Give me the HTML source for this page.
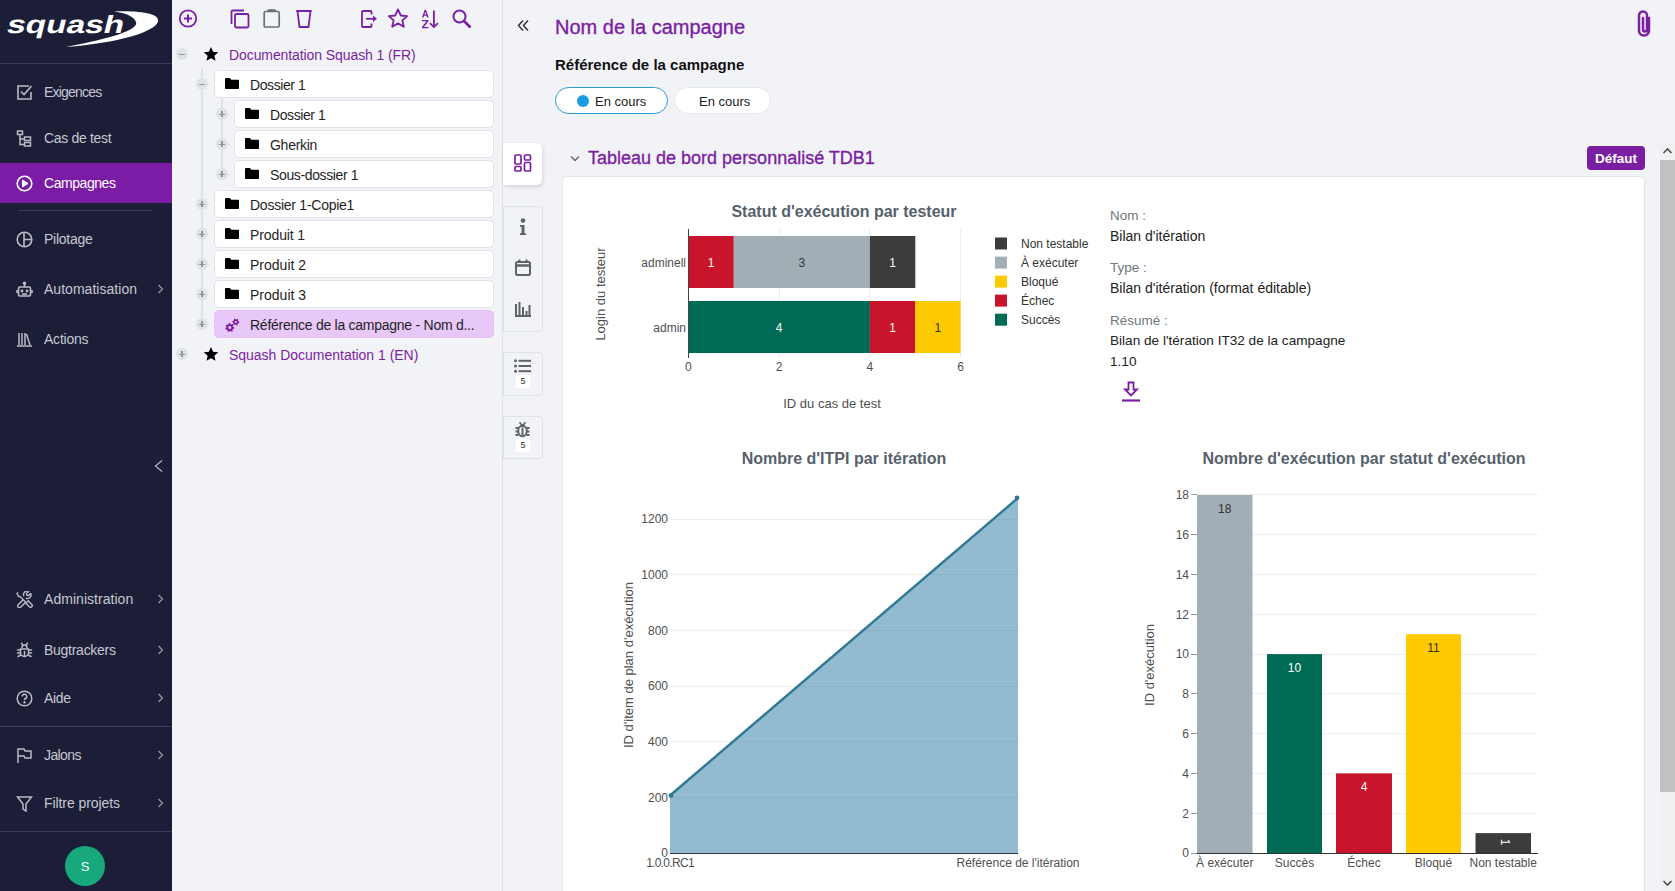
<!DOCTYPE html>
<html><head><meta charset="utf-8">
<style>
*{box-sizing:border-box;margin:0;padding:0}
html,body{width:1675px;height:891px;overflow:hidden;background:#f2f3f7;font-family:"Liberation Sans",sans-serif;}
.abs{position:absolute}
#nav{position:absolute;left:0;top:0;width:172px;height:891px;background:#1c1e37;color:#c5c8d1}
.mi{position:absolute;left:0;width:172px;height:40px;font-size:14px;line-height:40px}
.mi .t{position:absolute;left:44px;top:0;white-space:nowrap}
.mi svg{position:absolute;left:16px;top:12px}
.mi .ch{position:absolute;left:156.5px;top:15px}
.hr{position:absolute;height:1px;background:#3a3d58}
#tree{position:absolute;left:172px;top:0;width:331px;height:891px;background:#f2f3f7;border-right:1px solid #dde0e6}
.tb{position:absolute;top:9px}
.node{position:absolute;height:28px;background:#fff;border:1px solid #dfe2e8;border-radius:5px;font-size:14px;color:#1f1f1f;line-height:26px}
.node .t{position:absolute;left:35px;top:1px;white-space:nowrap}
.node .fi{position:absolute;left:10px;top:7px}
.tog{position:absolute;width:12px;height:12px;border-radius:50%;background:#dfe3e8}
.tog:before{content:"";position:absolute;left:3px;top:5.5px;width:6px;height:1.2px;background:#8e97a0}
.tog.p:after{content:"";position:absolute;left:5.4px;top:3px;width:1.2px;height:6px;background:#8e97a0}
.vl{position:absolute;width:2px;background:#dfe3e8}
.hl{position:absolute;height:1px;background:#dfe3e8}
</style></head><body>

<!-- SIDEBAR -->
<div id="nav">
  <svg class="abs" style="left:0;top:0" width="172" height="63" viewBox="0 0 172 63">
    <path d="M114 11.5 C142 10.5 160 14 158 21.5 C155 32 118 43 66 47 C112 38 139 30 136 22 C134 16.5 126 13 114 11.5 Z" fill="#fff"/>
    <text x="0" y="0" transform="translate(5.5 32.5) skewX(-14)" font-family="Liberation Sans" font-weight="bold" font-size="25" fill="#fff" textLength="117" lengthAdjust="spacingAndGlyphs">squash</text>
  </svg>
  <div class="hr" style="left:0;top:63px;width:172px"></div>

  <div class="mi" style="top:72px">
    <svg width="17" height="17" viewBox="0 0 17 17" fill="none" stroke="#b9bcc7" stroke-width="1.6"><path d="M13 2H2v13h13V8"/><path d="M5 7.5l3 3L15.5 2"/></svg>
    <span class="t" style="letter-spacing:-0.79px">Exigences</span></div>
  <div class="mi" style="top:118px">
    <svg width="17" height="17" viewBox="0 0 17 17" fill="none" stroke="#b9bcc7" stroke-width="1.5"><rect x="1.5" y="1" width="5" height="3.5"/><rect x="8.5" y="7" width="6" height="3.5"/><rect x="8.5" y="12.5" width="6" height="3.5"/><path d="M4 4.5v10h4.5M4 9h4.5"/></svg>
    <span class="t" style="letter-spacing:-0.32px">Cas de test</span></div>
  <div class="mi" style="top:163px;background:#7a1ca6;color:#fff">
    <svg width="17" height="17" viewBox="0 0 17 17" fill="none" stroke="#fff" stroke-width="1.6"><circle cx="8.5" cy="8.5" r="7.3"/><path d="M6.5 5v7l5.5-3.5z" fill="#fff" stroke-width="1"/></svg>
    <span class="t" style="letter-spacing:-0.45px">Campagnes</span></div>
  <div class="hr" style="left:18px;top:210px;width:134px"></div>
  <div class="mi" style="top:219px">
    <svg width="17" height="17" viewBox="0 0 17 17" fill="none" stroke="#b9bcc7" stroke-width="1.6"><circle cx="8.5" cy="8.5" r="7.3"/><path d="M8 1.2v14.6M8 8.5h7.3"/></svg>
    <span class="t" style="letter-spacing:-0.26px">Pilotage</span></div>
  <div class="mi" style="top:269px">
    <svg width="17" height="17" viewBox="0 0 17 17" fill="none" stroke="#b9bcc7" stroke-width="1.6"><rect x="2.5" y="6" width="12" height="9" rx="1.5"/><path d="M8.5 6V3"/><circle cx="8.5" cy="2.3" r="1" fill="#b9bcc7"/><path d="M1 9v3M16 9v3"/><circle cx="6" cy="10" r=".6" fill="#b9bcc7"/><circle cx="11" cy="10" r=".6" fill="#b9bcc7"/><path d="M6 13h5"/></svg>
    <span class="t" style="letter-spacing:0.03px">Automatisation</span><svg class="ch" width="7" height="10" viewBox="0 0 7 10" fill="none" stroke="#8f93a4" stroke-width="1.3"><path d="M1.5 1l4 4-4 4"/></svg></div>
  <div class="mi" style="top:319px">
    <svg width="17" height="17" viewBox="0 0 17 17" fill="none" stroke="#b9bcc7" stroke-width="1.5"><path d="M3 2v12M6 2v12M9 2v12M10.5 3l3.5 11M1 15h15"/></svg>
    <span class="t" style="letter-spacing:-0.22px">Actions</span></div>

  <svg class="abs" style="left:154px;top:459px" width="9" height="14" viewBox="0 0 9 14" fill="none" stroke="#b3b6d2" stroke-width="1.2"><path d="M8 1.5L1.5 7 8 12.5"/></svg>

  <div class="mi" style="top:579px">
    <svg width="17" height="17" viewBox="0 0 17 17" fill="none" stroke="#b9bcc7" stroke-width="1.4" stroke-linejoin="round"><path d="M2 1.5L1 2.5l1.5 3h1.5l5.5 5.5"/><path d="M9.8 12.2l2.4-2.4 3.6 3.6a1.7 1.7 0 0 1-2.4 2.4z"/><path d="M7.2 8.8l-5 5a1.7 1.7 0 0 0 2.4 2.4l5-5"/><path d="M9.8 7.2a3.6 3.6 0 0 0 4.9-4.7l-2.1 2.1-1.7-.4-.4-1.7 2.1-2.1a3.6 3.6 0 0 0-4.7 4.9"/></svg>
    <span class="t" style="letter-spacing:0.04px">Administration</span><svg class="ch" width="7" height="10" viewBox="0 0 7 10" fill="none" stroke="#8f93a4" stroke-width="1.3"><path d="M1.5 1l4 4-4 4"/></svg></div>
  <div class="mi" style="top:630px">
    <svg width="17" height="17" viewBox="0 0 17 17" fill="none" stroke="#b9bcc7" stroke-width="1.5" stroke-linecap="round"><path d="M6 5.5a2.5 2.5 0 0 1 5 0"/><path d="M4.5 7h8v3.5a4 4 0 0 1-8 0z"/><path d="M8.5 9.5v5"/><path d="M1.5 8h2.5M13 8h2.5M1.5 11h2.5M13 11h2.5M2 14.5l2.5-1.2M15 14.5l-2.5-1.2M5.5 1.2l1.5 2.3M11.5 1.2L10 3.5"/></svg>
    <span class="t" style="letter-spacing:-0.27px">Bugtrackers</span><svg class="ch" width="7" height="10" viewBox="0 0 7 10" fill="none" stroke="#8f93a4" stroke-width="1.3"><path d="M1.5 1l4 4-4 4"/></svg></div>
  <div class="mi" style="top:678px">
    <svg width="17" height="17" viewBox="0 0 17 17" fill="none" stroke="#b9bcc7" stroke-width="1.5"><circle cx="8.5" cy="8.5" r="7.3"/><path d="M6.3 6.5a2.2 2.2 0 1 1 3 2c-.7.3-.8.8-.8 1.6"/><circle cx="8.5" cy="12.3" r=".5" fill="#b9bcc7"/></svg>
    <span class="t" style="letter-spacing:-0.30px">Aide</span><svg class="ch" width="7" height="10" viewBox="0 0 7 10" fill="none" stroke="#8f93a4" stroke-width="1.3"><path d="M1.5 1l4 4-4 4"/></svg></div>
  <div class="hr" style="left:0;top:726px;width:172px"></div>
  <div class="mi" style="top:735px">
    <svg width="17" height="17" viewBox="0 0 17 17" fill="none" stroke="#b9bcc7" stroke-width="1.5"><path d="M2 16V2h6l1 2h6v7H9l-1-2H2"/></svg>
    <span class="t" style="letter-spacing:-0.61px">Jalons</span><svg class="ch" width="7" height="10" viewBox="0 0 7 10" fill="none" stroke="#8f93a4" stroke-width="1.3"><path d="M1.5 1l4 4-4 4"/></svg></div>
  <div class="mi" style="top:783px">
    <svg width="17" height="17" viewBox="0 0 17 17" fill="none" stroke="#b9bcc7" stroke-width="1.5"><path d="M1.5 2h14l-5.5 7v7l-3-2V9z"/></svg>
    <span class="t" style="letter-spacing:-0.08px">Filtre projets</span><svg class="ch" width="7" height="10" viewBox="0 0 7 10" fill="none" stroke="#8f93a4" stroke-width="1.3"><path d="M1.5 1l4 4-4 4"/></svg></div>
  <div class="hr" style="left:0;top:831px;width:172px"></div>
  <div class="abs" style="left:65px;top:846px;width:40px;height:40px;border-radius:50%;background:#17a97c;color:#fff;font-size:13px;line-height:41px;text-align:center">S</div>
</div>

<!-- TREE -->
<div id="tree">
  <!-- toolbar -->
  <svg class="abs" style="left:6px;top:9px" width="20" height="20" viewBox="0 0 20 20" fill="none" stroke="#7b1fa2" stroke-width="1.8"><circle cx="10" cy="9.5" r="8.2"/><path d="M10 5.5v8M6 9.5h8" stroke-width="2"/></svg>
  <svg class="abs" style="left:58px;top:9px" width="20" height="20" viewBox="0 0 20 20" fill="none" stroke="#7b1fa2" stroke-width="1.8"><path d="M1.5 15V2.5a1 1 0 0 1 1-1H14"/><rect x="5" y="5" width="13.5" height="13.5" rx="1.5"/></svg>
  <svg class="abs" style="left:91px;top:8px" width="18" height="20" viewBox="0 0 18 20" fill="none" stroke="#6b7079" stroke-width="1.7"><rect x="1.2" y="3.5" width="15" height="15.5" rx="1.2"/><path d="M5.5 3.5V2.2h6.5v1.3"/><circle cx="8.7" cy="1.9" r="1" fill="#6b7079" stroke="none"/></svg>
  <svg class="abs" style="left:123px;top:9px" width="18" height="20" viewBox="0 0 18 20" fill="none" stroke="#7b1fa2" stroke-width="1.8"><path d="M1.2 2h15.5M2.5 2l2 16h9l2-16"/></svg>
  <svg class="abs" style="left:188.5px;top:10px" width="17" height="18" viewBox="0 0 17 18" fill="none" stroke="#7b1fa2" stroke-width="1.8"><path d="M10.5 4.5V2a1 1 0 0 0-1-1H2a1 1 0 0 0-1 1V16a1 1 0 0 0 1 1h7.5a1 1 0 0 0 1-1v-2.5"/><path d="M5 8.8h8"/><path d="M12 5.5l4 3.3-4 3.3z" fill="#7b1fa2" stroke="none"/></svg>
  <svg class="abs" style="left:215px;top:8px" width="22" height="21" viewBox="0 0 22 21" fill="none" stroke="#7b1fa2" stroke-width="1.8" stroke-linejoin="round"><path d="M11 1.5l2.8 6 6.4.6-4.9 4.3 1.5 6.4L11 15.4l-5.8 3.4 1.5-6.4L1.8 8.1l6.4-.6z"/></svg>
  <svg class="abs" style="left:249px;top:9px" width="18" height="20" viewBox="0 0 18 20" fill="#7b1fa2"><path d="M1 8.5L3.5 1h1.6L7.6 8.5H6.1l-.6-1.8H3.1l-.6 1.8zM3.5 5.5h1.7L4.3 2.7z"/><path d="M1 11h6.4v1.3L3 18h4.5v1.3H1v-1.3l4.4-5.7H1z"/><path d="M12 1.5h1.8v14.5l2.5-2.5 1.2 1.2-4.6 4.6-4.6-4.6 1.2-1.2 2.5 2.5z"/></svg>
  <svg class="abs" style="left:280px;top:9px" width="20" height="20" viewBox="0 0 20 20" fill="none" stroke="#7b1fa2" stroke-width="2"><circle cx="7.5" cy="7.5" r="6"/><path d="M12 12l6.5 6.5" stroke-width="2.6"/></svg>

  <!-- root 1 -->
  <div class="tog" style="left:4px;top:48px"></div>
  <svg class="abs" style="left:31px;top:46px" width="16" height="16" viewBox="0 0 24 24"><path d="M12 1.5l3.1 7.2 7.8.7-5.9 5.2 1.8 7.7L12 18.2l-6.8 4.1 1.8-7.7L1.1 9.4l7.8-.7z" fill="#000"/></svg>
  <div class="abs" style="left:57px;top:47px;font-size:14px;color:#7b1fa2;white-space:nowrap;line-height:17px;letter-spacing:-0.09px">Documentation Squash 1 (FR)</div>

  <div class="vl" style="left:29px;top:69px;height:256px"></div>
  <div class="vl" style="left:49px;top:99px;height:76px"></div>
  <div class="hl" style="left:30px;top:84px;width:8px"></div>
  <div class="tog " style="left:24px;top:78px"></div>
  <div class="node" style="left:42px;top:70px;width:280px"><svg class="fi" width="14" height="11" viewBox="0 0 15 12" preserveAspectRatio="none"><path d="M0 1.2C0 .5.5 0 1.2 0h4l1.6 1.8h7c.7 0 1.2.5 1.2 1.2v7.8c0 .7-.5 1.2-1.2 1.2H1.2C.5 12 0 11.5 0 10.8z" fill="#000"/></svg><span class="t" style="letter-spacing:-0.42px">Dossier 1</span></div>
  <div class="hl" style="left:50px;top:114px;width:8px"></div>
  <div class="tog p" style="left:44px;top:108px"></div>
  <div class="node" style="left:62px;top:100px;width:260px"><svg class="fi" width="14" height="11" viewBox="0 0 15 12" preserveAspectRatio="none"><path d="M0 1.2C0 .5.5 0 1.2 0h4l1.6 1.8h7c.7 0 1.2.5 1.2 1.2v7.8c0 .7-.5 1.2-1.2 1.2H1.2C.5 12 0 11.5 0 10.8z" fill="#000"/></svg><span class="t" style="letter-spacing:-0.42px">Dossier 1</span></div>
  <div class="hl" style="left:50px;top:144px;width:8px"></div>
  <div class="tog p" style="left:44px;top:138px"></div>
  <div class="node" style="left:62px;top:130px;width:260px"><svg class="fi" width="14" height="11" viewBox="0 0 15 12" preserveAspectRatio="none"><path d="M0 1.2C0 .5.5 0 1.2 0h4l1.6 1.8h7c.7 0 1.2.5 1.2 1.2v7.8c0 .7-.5 1.2-1.2 1.2H1.2C.5 12 0 11.5 0 10.8z" fill="#000"/></svg><span class="t" style="letter-spacing:-0.27px">Gherkin</span></div>
  <div class="hl" style="left:50px;top:174px;width:8px"></div>
  <div class="tog p" style="left:44px;top:168px"></div>
  <div class="node" style="left:62px;top:160px;width:260px"><svg class="fi" width="14" height="11" viewBox="0 0 15 12" preserveAspectRatio="none"><path d="M0 1.2C0 .5.5 0 1.2 0h4l1.6 1.8h7c.7 0 1.2.5 1.2 1.2v7.8c0 .7-.5 1.2-1.2 1.2H1.2C.5 12 0 11.5 0 10.8z" fill="#000"/></svg><span class="t" style="letter-spacing:-0.37px">Sous-dossier 1</span></div>
  <div class="hl" style="left:30px;top:204px;width:8px"></div>
  <div class="tog p" style="left:24px;top:198px"></div>
  <div class="node" style="left:42px;top:190px;width:280px"><svg class="fi" width="14" height="11" viewBox="0 0 15 12" preserveAspectRatio="none"><path d="M0 1.2C0 .5.5 0 1.2 0h4l1.6 1.8h7c.7 0 1.2.5 1.2 1.2v7.8c0 .7-.5 1.2-1.2 1.2H1.2C.5 12 0 11.5 0 10.8z" fill="#000"/></svg><span class="t" style="letter-spacing:-0.25px">Dossier 1-Copie1</span></div>
  <div class="hl" style="left:30px;top:234px;width:8px"></div>
  <div class="tog p" style="left:24px;top:228px"></div>
  <div class="node" style="left:42px;top:220px;width:280px"><svg class="fi" width="14" height="11" viewBox="0 0 15 12" preserveAspectRatio="none"><path d="M0 1.2C0 .5.5 0 1.2 0h4l1.6 1.8h7c.7 0 1.2.5 1.2 1.2v7.8c0 .7-.5 1.2-1.2 1.2H1.2C.5 12 0 11.5 0 10.8z" fill="#000"/></svg><span class="t" style="letter-spacing:-0.11px">Produit 1</span></div>
  <div class="hl" style="left:30px;top:264px;width:8px"></div>
  <div class="tog p" style="left:24px;top:258px"></div>
  <div class="node" style="left:42px;top:250px;width:280px"><svg class="fi" width="14" height="11" viewBox="0 0 15 12" preserveAspectRatio="none"><path d="M0 1.2C0 .5.5 0 1.2 0h4l1.6 1.8h7c.7 0 1.2.5 1.2 1.2v7.8c0 .7-.5 1.2-1.2 1.2H1.2C.5 12 0 11.5 0 10.8z" fill="#000"/></svg><span class="t" style="letter-spacing:0.01px">Produit 2</span></div>
  <div class="hl" style="left:30px;top:294px;width:8px"></div>
  <div class="tog p" style="left:24px;top:288px"></div>
  <div class="node" style="left:42px;top:280px;width:280px"><svg class="fi" width="14" height="11" viewBox="0 0 15 12" preserveAspectRatio="none"><path d="M0 1.2C0 .5.5 0 1.2 0h4l1.6 1.8h7c.7 0 1.2.5 1.2 1.2v7.8c0 .7-.5 1.2-1.2 1.2H1.2C.5 12 0 11.5 0 10.8z" fill="#000"/></svg><span class="t" style="letter-spacing:0.01px">Produit 3</span></div>
  <div class="hl" style="left:30px;top:324px;width:8px"></div>
  <div class="tog p" style="left:24px;top:318px"></div>
  <div class="node" style="left:42px;top:310px;width:280px;background:#e7c8f8;border-color:#e2c3f3"><svg class="fi" style="left:10px;top:7px" width="15" height="15" viewBox="0 0 15 15"><polygon points="9.40,9.60 9.28,10.62 7.86,11.08 7.46,11.72 7.67,13.20 6.80,13.74 5.56,12.91 4.80,13.00 3.78,14.08 2.80,13.74 2.68,12.26 2.14,11.72 0.66,11.60 0.32,10.62 1.40,9.60 1.49,8.84 0.66,7.60 1.20,6.73 2.68,6.94 3.32,6.54 3.78,5.12 4.80,5.00 5.56,6.29 6.28,6.54 7.67,6.00 8.40,6.73 7.86,8.12 8.11,8.84" fill="#7b1fa2"/><circle cx="4.8" cy="9.6" r="1.5" fill="#e7c8f8"/><polygon points="14.30,4.00 14.18,4.91 13.05,5.30 12.64,5.84 12.55,7.03 11.71,7.38 10.80,6.60 10.13,6.51 9.05,7.03 8.33,6.47 8.55,5.30 8.29,4.67 7.30,4.00 7.42,3.09 8.55,2.70 8.96,2.16 9.05,0.97 9.89,0.62 10.80,1.40 11.47,1.49 12.55,0.97 13.27,1.53 13.05,2.70 13.31,3.33" fill="#7b1fa2"/><circle cx="10.8" cy="4.0" r="1.1" fill="#e7c8f8"/></svg><span class="t" style="letter-spacing:-0.26px">Référence de la campagne - Nom d...</span></div>
  <div class="tog p" style="left:4px;top:348px"></div>
  <svg class="abs" style="left:31px;top:346px" width="16" height="16" viewBox="0 0 24 24"><path d="M12 1.5l3.1 7.2 7.8.7-5.9 5.2 1.8 7.7L12 18.2l-6.8 4.1 1.8-7.7L1.1 9.4l7.8-.7z" fill="#000"/></svg>
  <div class="abs" style="left:57px;top:347px;font-size:14px;color:#7b1fa2;white-space:nowrap;line-height:17px;letter-spacing:-0.02px">Squash Documentation 1 (EN)</div>
</div>


<!-- MAIN HEADER -->
<svg class="abs" style="left:517px;top:19px" width="12" height="13" viewBox="0 0 12 13" fill="none" stroke="#333" stroke-width="1.5"><path d="M6 1.5L1.5 6.5 6 11.5M11 1.5L6.5 6.5 11 11.5"/></svg>
<div class="abs" style="left:555px;top:14.5px;font-size:20px;line-height:24px;color:#7b1fa2;-webkit-text-stroke:0.35px #7b1fa2;white-space:nowrap">Nom de la campagne</div>
<div class="abs" style="left:555px;top:56px;font-size:15px;line-height:18px;font-weight:bold;color:#111;white-space:nowrap">Référence de la campagne</div>
<div class="abs" style="left:555px;top:87px;width:113px;height:27px;border:1.5px solid #2b9bd3;border-radius:14px;background:#fff"></div>
<div class="abs" style="left:577px;top:94.5px;width:12px;height:12px;border-radius:50%;background:#1a9be6"></div>
<div class="abs" style="left:595px;top:93px;font-size:13px;line-height:17px;color:#222;white-space:nowrap">En cours</div>
<div class="abs" style="left:674px;top:87px;width:97px;height:27px;border:1px solid #e3e6eb;border-radius:14px;background:#fff"></div>
<div class="abs" style="left:699px;top:93px;font-size:13px;line-height:17px;color:#222;white-space:nowrap">En cours</div>

<svg class="abs" style="left:1636px;top:10px" width="16" height="28" viewBox="0 0 16 28" fill="none" stroke="#7b1fa2" stroke-width="2.5" stroke-linecap="round"><path d="M13 8v12.5a5 5 0 0 1-10 0V5.5a4 4 0 0 1 8 0v14a2 2 0 0 1-4 0V8"/></svg>

<!-- side tabs -->
<div class="abs" style="left:503px;top:143px;width:39px;height:42px;background:#fff;border-radius:0 5px 5px 0;box-shadow:1px 2px 4px rgba(0,0,0,.12)"></div>
<svg class="abs" style="left:514px;top:154px" width="18" height="18" viewBox="0 0 18 18" fill="none" stroke="#7b1fa2" stroke-width="1.7"><rect x="1" y="1" width="6" height="9" rx="1"/><rect x="10.5" y="1" width="6" height="5" rx="1"/><rect x="1" y="12.5" width="6" height="4.5" rx="1"/><rect x="10.5" y="8.5" width="6" height="8.5" rx="1"/></svg>
<div class="abs" style="left:503px;top:206px;width:40px;height:126px;border:1px solid #dfe2e7;border-radius:0 4px 4px 0"></div>
<svg class="abs" style="left:518px;top:218px" width="10" height="18" viewBox="0 0 10 18" fill="#5f6368"><circle cx="5" cy="2.6" r="2.3"/><path d="M2 7h4.5v8.3H8V17H2v-1.7h1.5V8.7H2z"/></svg>
<svg class="abs" style="left:515px;top:259px" width="16" height="17" viewBox="0 0 16 17" fill="none" stroke="#5f6368" stroke-width="2"><rect x="1" y="3" width="14" height="13" rx="1.5"/><path d="M1 6.5h14" stroke-width="2.5"/><path d="M4.5 0.5v3.5M11.5 0.5v3.5"/></svg>
<svg class="abs" style="left:515px;top:302px" width="16" height="15" viewBox="0 0 16 15" fill="#5f6368"><path d="M0 2h2v11h14v2H0z"/><path d="M3.5 0h2v13h-2zM7 5h2v8H7zM10.5 9h2v4h-2zM13.5 3h2v10h-2z"/></svg>
<div class="abs" style="left:503px;top:352px;width:40px;height:44px;border:1px solid #dfe2e7;border-radius:0 4px 4px 0"></div>
<svg class="abs" style="left:514px;top:359px" width="17" height="14" viewBox="0 0 17 14" fill="#5f6368"><circle cx="1.5" cy="1.8" r="1.5"/><circle cx="1.5" cy="7" r="1.5"/><circle cx="1.5" cy="12.2" r="1.5"/><rect x="4.5" y="0.8" width="12.5" height="2"/><rect x="4.5" y="6" width="12.5" height="2"/><rect x="4.5" y="11.2" width="12.5" height="2"/></svg>
<div class="abs" style="left:516px;top:375px;width:14px;height:13px;background:#fff;font-size:9px;line-height:13px;text-align:center;color:#333">5</div>
<div class="abs" style="left:503px;top:416px;width:40px;height:43px;border:1px solid #dfe2e7;border-radius:0 4px 4px 0"></div>
<svg class="abs" style="left:514px;top:421px" width="17" height="17" viewBox="0 0 17 17" fill="none" stroke="#5f6368" stroke-width="2"><ellipse cx="8.5" cy="10" rx="4.3" ry="5.2"/><path d="M8.5 6.5v7.5M1.5 7h3M12.5 7h3M1.5 10.5h2.5M13 10.5h2.5M1.5 14h3M12.5 14h3"/><path d="M5.5 1.2l2 2.5h2l2-2.5" stroke-width="1.6"/><path d="M6 4.5h5v1.5H6z" fill="#5f6368" stroke="none"/></svg>
<div class="abs" style="left:516px;top:439px;width:14px;height:13px;background:#fff;font-size:9px;line-height:13px;text-align:center;color:#333">5</div>

<!-- section header -->
<svg class="abs" style="left:570px;top:155px" width="10" height="8" viewBox="0 0 10 8" fill="none" stroke="#666" stroke-width="1.4"><path d="M1 1.5l4 4 4-4"/></svg>
<div class="abs" style="left:588px;top:147px;font-size:18px;line-height:22px;color:#7b1fa2;-webkit-text-stroke:0.35px #7b1fa2;white-space:nowrap">Tableau de bord personnalisé TDB1</div>
<div class="abs" style="left:1587px;top:146px;width:58px;height:24px;background:#7b1fa2;border-radius:4px;color:#fff;font-weight:bold;font-size:13.5px;line-height:25px;text-align:center">Défaut</div>

<!-- card -->
<div class="abs" style="left:562px;top:176px;width:1083px;height:731px;background:#fff;border:1px solid #e3e6eb;border-radius:5px"></div>

<!-- scrollbar -->
<div class="abs" style="left:1660px;top:144px;width:15px;height:747px;background:#f1f1f1"></div>
<div class="abs" style="left:1660px;top:160px;width:15px;height:632px;background:#c1c1c1"></div>
<svg class="abs" style="left:1662px;top:146px" width="11" height="10" viewBox="0 0 11 10" fill="none" stroke="#505050" stroke-width="1.6"><path d="M1.5 7l4-4 4 4"/></svg>
<svg class="abs" style="left:1662px;top:878px" width="11" height="10" viewBox="0 0 11 10" fill="none" stroke="#505050" stroke-width="1.6"><path d="M1.5 3l4 4 4-4"/></svg>

<!--CHARTS--><svg class="abs" style="left:0;top:0" width="1675" height="891" viewBox="0 0 1675 891" font-family="Liberation Sans">
<text x="844.0" y="217.0" text-anchor="middle" font-size="16" fill="#56616c" font-weight="bold">Statut d'exécution par testeur</text>
<line x1="779.5" y1="229" x2="779.5" y2="358" stroke="#ededed" stroke-width="1"/>
<line x1="869.5" y1="229" x2="869.5" y2="358" stroke="#ededed" stroke-width="1"/>
<line x1="960.5" y1="229" x2="960.5" y2="358" stroke="#ededed" stroke-width="1"/>
<rect x="688.4" y="236" width="45.4" height="52" fill="#c8152b"/>
<rect x="733.8" y="236" width="136.1" height="52" fill="#a2aeb5"/>
<rect x="869.9" y="236" width="45.4" height="52" fill="#3c3c3c"/>
<rect x="688.4" y="301" width="181.5" height="52" fill="#006b54"/>
<rect x="869.9" y="301" width="45.4" height="52" fill="#c8152b"/>
<rect x="915.2" y="301" width="45.4" height="52" fill="#fdc900"/>
<line x1="688.5" y1="229" x2="688.5" y2="358" stroke="#444" stroke-width="1"/>
<text x="711.1" y="266.5" text-anchor="middle" font-size="12" fill="#fff" >1</text>
<text x="801.8" y="266.5" text-anchor="middle" font-size="12" fill="#333" >3</text>
<text x="892.6" y="266.5" text-anchor="middle" font-size="12" fill="#fff" >1</text>
<text x="779.1" y="331.5" text-anchor="middle" font-size="12" fill="#fff" >4</text>
<text x="892.6" y="331.5" text-anchor="middle" font-size="12" fill="#fff" >1</text>
<text x="937.9" y="331.5" text-anchor="middle" font-size="12" fill="#333" >1</text>
<text x="686.0" y="266.5" text-anchor="end" font-size="12" fill="#505050" >adminell</text>
<text x="686.0" y="331.5" text-anchor="end" font-size="12" fill="#505050" >admin</text>
<text x="688.4" y="371.0" text-anchor="middle" font-size="12" fill="#505050" >0</text>
<text x="779.1" y="371.0" text-anchor="middle" font-size="12" fill="#505050" >2</text>
<text x="869.9" y="371.0" text-anchor="middle" font-size="12" fill="#505050" >4</text>
<text x="960.6" y="371.0" text-anchor="middle" font-size="12" fill="#505050" >6</text>
<text x="832.0" y="407.5" text-anchor="middle" font-size="13" fill="#505050" >ID du cas de test</text>
<text x="0.0" y="0.0" text-anchor="middle" font-size="13" fill="#505050" transform="translate(605 294) rotate(-90)">Login du testeur</text>
<rect x="995" y="237.5" width="12" height="12" fill="#3c3c3c"/>
<text x="1021.0" y="247.5" text-anchor="start" font-size="12" fill="#333" >Non testable</text>
<rect x="995" y="256.6" width="12" height="12" fill="#a2aeb5"/>
<text x="1021.0" y="266.6" text-anchor="start" font-size="12" fill="#333" >À exécuter</text>
<rect x="995" y="275.6" width="12" height="12" fill="#fdc900"/>
<text x="1021.0" y="285.6" text-anchor="start" font-size="12" fill="#333" >Bloqué</text>
<rect x="995" y="294.6" width="12" height="12" fill="#c8152b"/>
<text x="1021.0" y="304.6" text-anchor="start" font-size="12" fill="#333" >Échec</text>
<rect x="995" y="313.7" width="12" height="12" fill="#006b54"/>
<text x="1021.0" y="323.7" text-anchor="start" font-size="12" fill="#333" >Succès</text>
<text x="844.0" y="464.0" text-anchor="middle" font-size="16" fill="#56616c" font-weight="bold">Nombre d'ITPI par itération</text>
<line x1="670" y1="797.5" x2="1018" y2="797.5" stroke="#ededed" stroke-width="1"/>
<line x1="670" y1="741.5" x2="1018" y2="741.5" stroke="#ededed" stroke-width="1"/>
<line x1="670" y1="686.5" x2="1018" y2="686.5" stroke="#ededed" stroke-width="1"/>
<line x1="670" y1="630.5" x2="1018" y2="630.5" stroke="#ededed" stroke-width="1"/>
<line x1="670" y1="574.5" x2="1018" y2="574.5" stroke="#ededed" stroke-width="1"/>
<line x1="670" y1="519.5" x2="1018" y2="519.5" stroke="#ededed" stroke-width="1"/>
<defs><clipPath id="ar"><polygon points="670,853 670,795.5 1018,498 1018,853"/></clipPath></defs>
<polygon points="670,853 670,795.5 1018,498 1018,853" fill="#93bbd0"/>
<g clip-path="url(#ar)">
<line x1="670" y1="797.5" x2="1018" y2="797.5" stroke="#8ab2c7" stroke-width="1"/>
<line x1="670" y1="741.5" x2="1018" y2="741.5" stroke="#8ab2c7" stroke-width="1"/>
<line x1="670" y1="686.5" x2="1018" y2="686.5" stroke="#8ab2c7" stroke-width="1"/>
<line x1="670" y1="630.5" x2="1018" y2="630.5" stroke="#8ab2c7" stroke-width="1"/>
<line x1="670" y1="574.5" x2="1018" y2="574.5" stroke="#8ab2c7" stroke-width="1"/>
<line x1="670" y1="519.5" x2="1018" y2="519.5" stroke="#8ab2c7" stroke-width="1"/>
</g>
<line x1="670" y1="795.5" x2="1018" y2="498" stroke="#2f7896" stroke-width="2.4"/>
<circle cx="671" cy="795.5" r="2.4" fill="#2f7896"/><circle cx="1017" cy="498" r="2.4" fill="#2f7896"/>
<line x1="670" y1="853.5" x2="1018" y2="853.5" stroke="#333" stroke-width="1"/>
<text x="668.0" y="857.3" text-anchor="end" font-size="12" fill="#505050" >0</text>
<text x="668.0" y="801.6" text-anchor="end" font-size="12" fill="#505050" >200</text>
<text x="668.0" y="746.0" text-anchor="end" font-size="12" fill="#505050" >400</text>
<text x="668.0" y="690.3" text-anchor="end" font-size="12" fill="#505050" >600</text>
<text x="668.0" y="634.6" text-anchor="end" font-size="12" fill="#505050" >800</text>
<text x="668.0" y="579.0" text-anchor="end" font-size="12" fill="#505050" >1000</text>
<text x="668.0" y="523.3" text-anchor="end" font-size="12" fill="#505050" >1200</text>
<text x="670.0" y="866.5" text-anchor="middle" font-size="12" fill="#505050" letter-spacing="-0.7">1.0.0.RC1</text>
<text x="1018.0" y="866.5" text-anchor="middle" font-size="12" fill="#505050" >Référence de l'itération</text>
<text x="0.0" y="0.0" text-anchor="middle" font-size="13" fill="#505050" transform="translate(633 665) rotate(-90)">ID d'item de plan d'exécution</text>
<text x="1364.0" y="464.0" text-anchor="middle" font-size="16" fill="#56616c" font-weight="bold">Nombre d'exécution par statut d'exécution</text>
<line x1="1197" y1="813.5" x2="1538" y2="813.5" stroke="#ededed" stroke-width="1"/>
<line x1="1197" y1="773.5" x2="1538" y2="773.5" stroke="#ededed" stroke-width="1"/>
<line x1="1197" y1="733.5" x2="1538" y2="733.5" stroke="#ededed" stroke-width="1"/>
<line x1="1197" y1="693.5" x2="1538" y2="693.5" stroke="#ededed" stroke-width="1"/>
<line x1="1197" y1="654.5" x2="1538" y2="654.5" stroke="#ededed" stroke-width="1"/>
<line x1="1197" y1="614.5" x2="1538" y2="614.5" stroke="#ededed" stroke-width="1"/>
<line x1="1197" y1="574.5" x2="1538" y2="574.5" stroke="#ededed" stroke-width="1"/>
<line x1="1197" y1="534.5" x2="1538" y2="534.5" stroke="#ededed" stroke-width="1"/>
<line x1="1197" y1="494.5" x2="1538" y2="494.5" stroke="#ededed" stroke-width="1"/>
<line x1="1191" y1="853.5" x2="1197" y2="853.5" stroke="#999" stroke-width="1"/>
<text x="1189.0" y="857.3" text-anchor="end" font-size="12" fill="#505050" >0</text>
<line x1="1191" y1="813.5" x2="1197" y2="813.5" stroke="#999" stroke-width="1"/>
<text x="1189.0" y="817.5" text-anchor="end" font-size="12" fill="#505050" >2</text>
<line x1="1191" y1="773.5" x2="1197" y2="773.5" stroke="#999" stroke-width="1"/>
<text x="1189.0" y="777.7" text-anchor="end" font-size="12" fill="#505050" >4</text>
<line x1="1191" y1="733.5" x2="1197" y2="733.5" stroke="#999" stroke-width="1"/>
<text x="1189.0" y="738.0" text-anchor="end" font-size="12" fill="#505050" >6</text>
<line x1="1191" y1="693.5" x2="1197" y2="693.5" stroke="#999" stroke-width="1"/>
<text x="1189.0" y="698.2" text-anchor="end" font-size="12" fill="#505050" >8</text>
<line x1="1191" y1="654.5" x2="1197" y2="654.5" stroke="#999" stroke-width="1"/>
<text x="1189.0" y="658.4" text-anchor="end" font-size="12" fill="#505050" >10</text>
<line x1="1191" y1="614.5" x2="1197" y2="614.5" stroke="#999" stroke-width="1"/>
<text x="1189.0" y="618.6" text-anchor="end" font-size="12" fill="#505050" >12</text>
<line x1="1191" y1="574.5" x2="1197" y2="574.5" stroke="#999" stroke-width="1"/>
<text x="1189.0" y="578.8" text-anchor="end" font-size="12" fill="#505050" >14</text>
<line x1="1191" y1="534.5" x2="1197" y2="534.5" stroke="#999" stroke-width="1"/>
<text x="1189.0" y="539.1" text-anchor="end" font-size="12" fill="#505050" >16</text>
<line x1="1191" y1="494.5" x2="1197" y2="494.5" stroke="#999" stroke-width="1"/>
<text x="1189.0" y="499.3" text-anchor="end" font-size="12" fill="#505050" >18</text>
<rect x="1197" y="495.0" width="55.5" height="358.0" fill="#a2aeb5"/>
<text x="1224.8" y="512.5" text-anchor="middle" font-size="12" fill="#333" >18</text>
<text x="1224.8" y="866.5" text-anchor="middle" font-size="12" fill="#505050" >À exécuter</text>
<rect x="1267" y="654.1" width="55" height="198.9" fill="#006b54"/>
<text x="1294.5" y="671.6" text-anchor="middle" font-size="12" fill="#fff" >10</text>
<text x="1294.5" y="866.5" text-anchor="middle" font-size="12" fill="#505050" >Succès</text>
<rect x="1336" y="773.4" width="56" height="79.6" fill="#c8152b"/>
<text x="1364.0" y="790.9" text-anchor="middle" font-size="12" fill="#fff" >4</text>
<text x="1364.0" y="866.5" text-anchor="middle" font-size="12" fill="#505050" >Échec</text>
<rect x="1406" y="634.2" width="55" height="218.8" fill="#fdc900"/>
<text x="1433.5" y="651.7" text-anchor="middle" font-size="12" fill="#333" >11</text>
<text x="1433.5" y="866.5" text-anchor="middle" font-size="12" fill="#505050" >Bloqué</text>
<rect x="1475.5" y="833.1" width="55.5" height="19.9" fill="#3c3c3c"/>
<text x="0.0" y="0.0" text-anchor="middle" font-size="12" fill="#fff" transform="translate(1501.2 842.1) rotate(90)">1</text>
<text x="1503.2" y="866.5" text-anchor="middle" font-size="12" fill="#505050" >Non testable</text>
<line x1="1197" y1="853.5" x2="1538" y2="853.5" stroke="#333" stroke-width="1"/>
<text x="0.0" y="0.0" text-anchor="middle" font-size="13" fill="#505050" transform="translate(1154 665) rotate(-90)">ID d'exécution</text>
</svg><!--/CHARTS-->
<div class="abs" style="left:1110px;top:208px;font-size:13.5px;line-height:16px;color:#6e7880">Nom :</div>
<div class="abs" style="left:1110px;top:228px;font-size:14px;line-height:16px;color:#222">Bilan d'itération</div>
<div class="abs" style="left:1110px;top:260px;font-size:13.5px;line-height:16px;color:#6e7880">Type :</div>
<div class="abs" style="left:1110px;top:280px;font-size:14px;line-height:16px;color:#222">Bilan d'itération (format éditable)</div>
<div class="abs" style="left:1110px;top:312.5px;font-size:13.5px;line-height:16px;color:#6e7880">Résumé :</div>
<div class="abs" style="left:1110px;top:330px;font-size:13.6px;line-height:21px;width:260px;color:#222">Bilan de l'tération IT32 de la campagne<br>1.10</div>
<svg class="abs" style="left:1121px;top:381px" width="20" height="21" viewBox="0 0 20 21" fill="none" stroke="#7b1fa2" stroke-width="1.8"><path d="M7.5 1.5h5v7h3.5L10 14.5 4 8.5h3.5z"/><path d="M1 19.5h18" stroke-width="2.2"/></svg>

</body></html>
